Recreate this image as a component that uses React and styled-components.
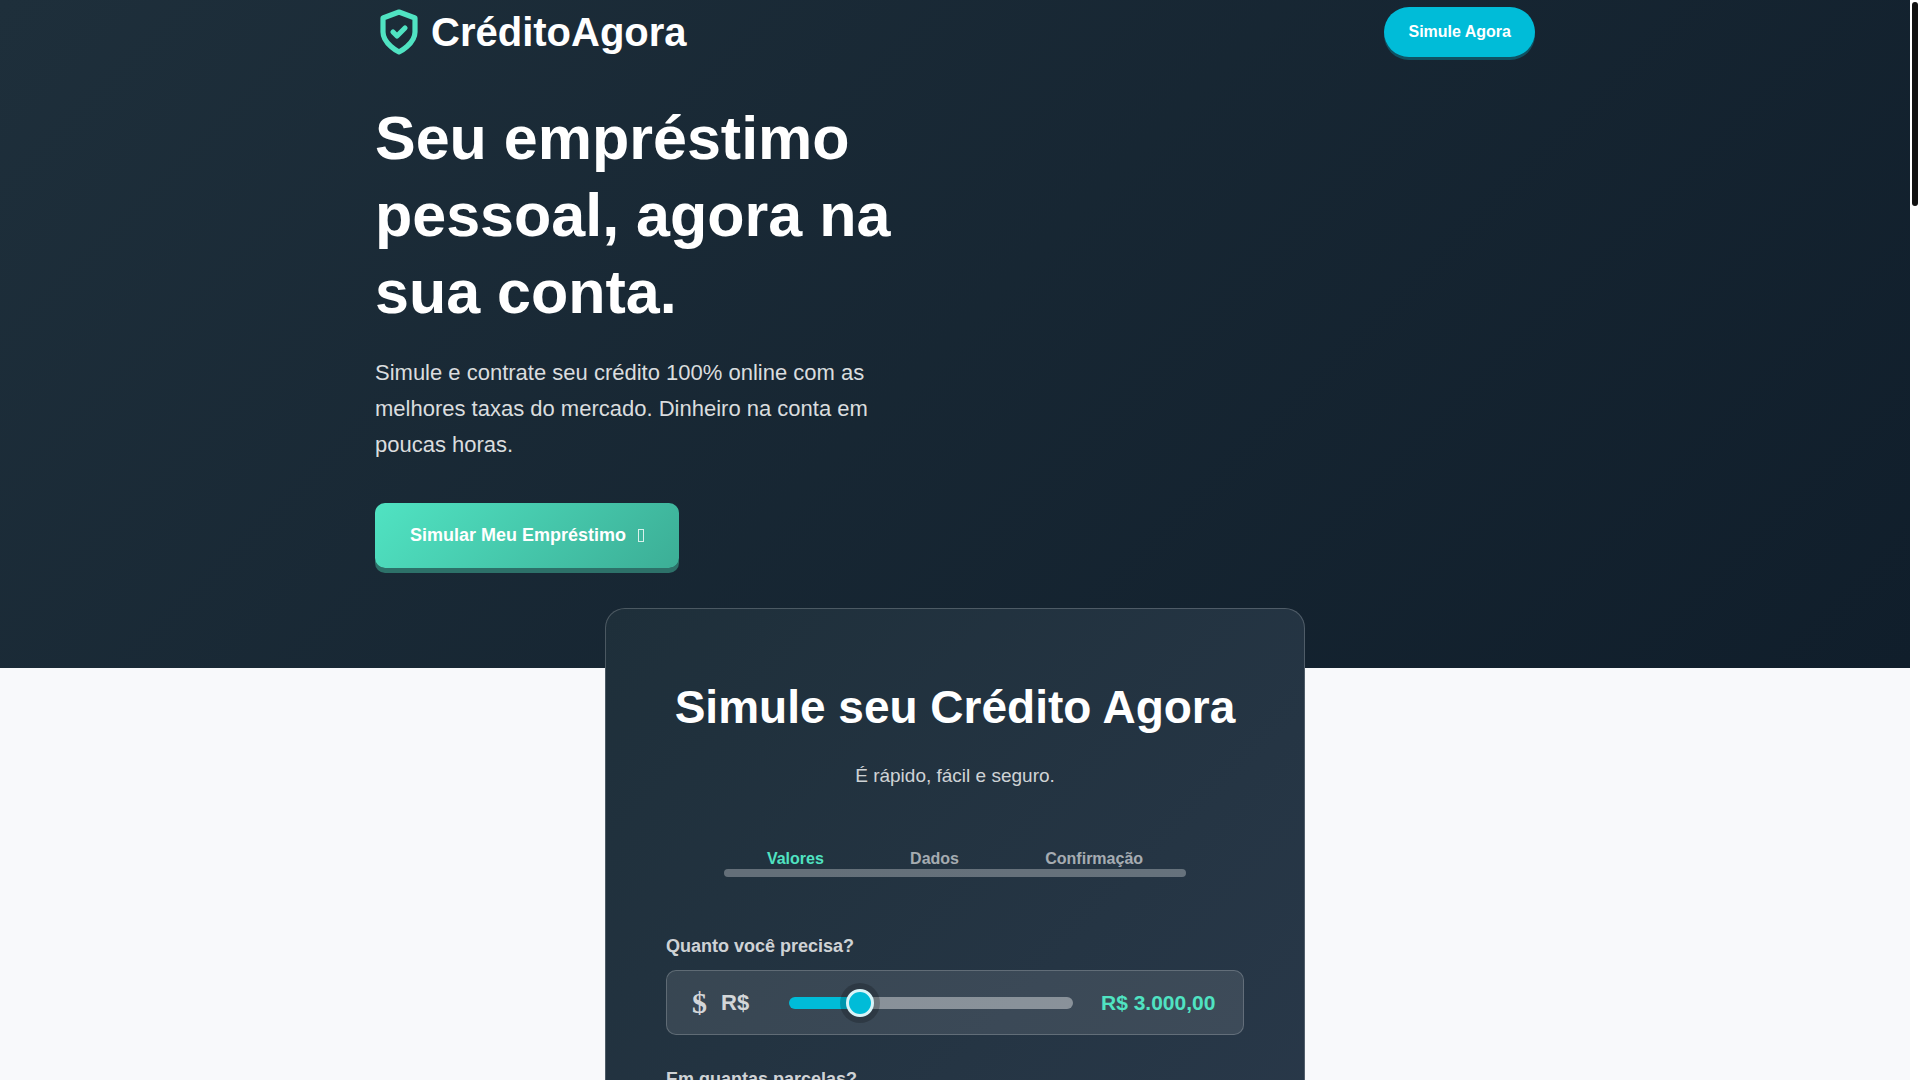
import { useState } from 'react';
import styled, { createGlobalStyle } from 'styled-components';

const GlobalStyle = createGlobalStyle`
  * {
    box-sizing: border-box;
    margin: 0;
    padding: 0;
  }

  html {
    scrollbar-width: none;
  }

  body {
    background-color: #f8f9fb;
    font-family: 'Liberation Sans', Arial, sans-serif;
    color: #ffffff;
  }
`;

const Shell = styled.div`
  display: flex;
  align-items: flex-start;
`;

const Page = styled.main`
  flex: 1;
  min-width: 0;
  padding-bottom: 100px;
`;

const ScrollRail = styled.div`
  position: sticky;
  top: 0;
  flex: 0 0 10px;
  height: 100vh;
  padding: 2px;
  background-color: #ffffff;
`;

const ScrollThumb = styled.div`
  height: 19%;
  border-radius: 3px;
  background-color: #111111;
`;

const Hero = styled.div`
  background: linear-gradient(135deg, #1e2f3b 0%, #101e2b 100%);
  padding-bottom: 100px;
`;

const Container = styled.div`
  max-width: 1200px;
  margin: 0 auto;
  padding: 0 20px;
`;

const Header = styled.header`
  height: 64px;
  display: flex;
  align-items: center;
  justify-content: space-between;
`;

const Logo = styled.a`
  display: flex;
  align-items: center;
  gap: 8px;
  color: #ffffff;
  font-size: 40px;
  font-weight: bold;
  text-decoration: none;
`;

const LogoMark = styled.svg`
  width: 48px;
  height: 48px;
`;

const HeaderButton = styled.button`
  height: 50px;
  padding: 0 24px;
  border: none;
  border-radius: 25px;
  background-color: #00bcd8;
  box-shadow: 0 3px 0 rgba(0, 188, 216, 0.3);
  color: #ffffff;
  font-family: inherit;
  font-size: 16px;
  font-weight: bold;
`;

const HeroContent = styled.section`
  display: grid;
  grid-template-columns: 1fr 1fr;
  column-gap: 60px;
  padding-top: 36px;
`;

const HeroTitle = styled.h1`
  font-size: 61px;
  line-height: 77px;
  margin-bottom: 24px;
`;

const HeroText = styled.p`
  font-size: 22px;
  line-height: 36px;
  color: rgba(255, 255, 255, 0.85);
  margin-bottom: 40px;
`;

const HeroButton = styled.button`
  height: 65px;
  padding: 0 35px;
  display: inline-flex;
  align-items: center;
  gap: 12px;
  border: none;
  border-radius: 10px;
  background: linear-gradient(135deg, #50e3c2 0%, #3cae96 100%);
  box-shadow: 0 5px 0 #2d7169;
  color: #ffffff;
  font-family: inherit;
  font-size: 18px;
  font-weight: bold;
`;

const ButtonGlyph = styled.span`
  width: 6px;
  height: 13px;
  border: 1px solid rgba(255, 255, 255, 0.8);
`;

const Card = styled.section`
  position: relative;
  max-width: 700px;
  margin: -60px auto 0;
  padding: 60px;
  border: 1px solid rgba(255, 255, 255, 0.2);
  border-radius: 20px;
  background: linear-gradient(135deg, #1e2f3a 0%, #2c3b4e 120%);
  background-origin: border-box;
`;

const CardTitle = styled.h2`
  font-size: 46px;
  line-height: 76px;
  text-align: center;
  margin-bottom: 16px;
`;

const CardText = styled.p`
  font-size: 19px;
  line-height: 30px;
  text-align: center;
  color: rgba(255, 255, 255, 0.8);
  margin-bottom: 58px;
`;

const Progress = styled.div`
  width: 80%;
  margin: 0 auto 55px;
`;

const Steps = styled.ol`
  display: flex;
  justify-content: space-around;
  list-style: none;
`;

const Step = styled.li`
  font-size: 16px;
  font-weight: bold;
  line-height: 20px;
  color: ${({ $active }) => ($active ? '#50e3c2' : 'rgba(255, 255, 255, 0.6)')};
`;

const ProgressTrack = styled.div`
  height: 8px;
  border-radius: 4px;
  background-color: rgba(255, 255, 255, 0.3);
`;

const Field = styled.div`
  margin-bottom: 30px;
`;

const FieldLabel = styled.label`
  display: block;
  font-size: 18px;
  font-weight: bold;
  line-height: 28px;
  color: rgba(255, 255, 255, 0.8);
  margin-bottom: 10px;
`;

const FieldBox = styled.div`
  height: 65px;
  display: flex;
  align-items: center;
  padding: 0 25px;
  border: 1px solid rgba(255, 255, 255, 0.2);
  border-radius: 10px;
  background-color: rgba(255, 255, 255, 0.1);
`;

const FieldIcon = styled.span`
  width: 29px;
  font-family: 'Liberation Serif', serif;
  font-size: 30px;
  font-weight: bold;
  color: rgba(255, 255, 255, 0.8);
`;

const FieldUnit = styled.span`
  width: 68px;
  font-size: 22px;
  font-weight: bold;
  color: rgba(255, 255, 255, 0.8);
`;

const Slider = styled.input`
  flex: 1;
  min-width: 0;
  height: 12px;
  appearance: none;
  border-radius: 6px;
  background: linear-gradient(
    to right,
    #00bcd8 var(--filled),
    rgba(255, 255, 255, 0.4) var(--filled)
  );

  &::-webkit-slider-thumb {
    appearance: none;
    width: 28px;
    height: 28px;
    border: 3px solid #d9f4f8;
    border-radius: 50%;
    background-color: #00bcd8;
    box-shadow: 0 0 0 6px rgba(0, 0, 0, 0.2);
  }
`;

const FieldValue = styled.output`
  min-width: 117px;
  margin-left: 28px;
  font-size: 21px;
  font-weight: bold;
  color: #50e3c2;
`;

const steps = ['Valores', 'Dados', 'Confirmação'];

const formatMoney = (value) =>
  `R$ ${String(value).replace(/\B(?=(\d{3})+$)/g, '.')},00`;

function SliderField({ id, label, icon, unit, min, max, step, initial, format }) {
  const [value, setValue] = useState(initial);
  const filled = ((value - min) / (max - min)) * 100;

  return (
    <Field>
      <FieldLabel htmlFor={id}>{label}</FieldLabel>
      <FieldBox>
        <FieldIcon aria-hidden='true'>{icon}</FieldIcon>
        <FieldUnit>{unit}</FieldUnit>
        <Slider
          id={id}
          type='range'
          min={min}
          max={max}
          step={step}
          value={value}
          onChange={(e) => setValue(Number(e.target.value))}
          style={{ '--filled': `${filled}%` }}
        />
        <FieldValue htmlFor={id}>{format(value)}</FieldValue>
      </FieldBox>
    </Field>
  );
}

function App() {
  return (
    <Shell>
      <GlobalStyle />
      <Page>
        <Hero>
          <Container>
            <Header>
              <Logo href='#'>
                <LogoMark
                  viewBox='0 0 24 24'
                  fill='none'
                  stroke='#50e3c2'
                  strokeWidth='2.6'
                  strokeLinejoin='round'
                  strokeLinecap='round'
                >
                  <path d='M12 22s8-4 8-10V5l-8-3-8 3v7c0 6 8 10 8 10z' />
                  <path d='M9 12l2 2 4-4' />
                </LogoMark>
                CréditoAgora
              </Logo>
              <HeaderButton type='button'>Simule Agora</HeaderButton>
            </Header>
            <HeroContent>
              <div>
                <HeroTitle>Seu empréstimo pessoal, agora na sua conta.</HeroTitle>
                <HeroText>
                  Simule e contrate seu crédito 100% online com as melhores
                  taxas do mercado. Dinheiro na conta em poucas horas.
                </HeroText>
                <HeroButton type='button'>
                  Simular Meu Empréstimo
                  <ButtonGlyph aria-hidden='true' />
                </HeroButton>
              </div>
            </HeroContent>
          </Container>
        </Hero>
        <Card>
          <CardTitle>Simule seu Crédito Agora</CardTitle>
          <CardText>É rápido, fácil e seguro.</CardText>
          <Progress>
            <Steps>
              {steps.map((step, index) => (
                <Step key={step} $active={index === 0}>
                  {step}
                </Step>
              ))}
            </Steps>
            <ProgressTrack />
          </Progress>
          <SliderField
            id='amount'
            label='Quanto você precisa?'
            icon='$'
            unit='R$'
            min={1000}
            max={10000}
            step={100}
            initial={3000}
            format={formatMoney}
          />
          <SliderField
            id='installments'
            label='Em quantas parcelas?'
            min={6}
            max={48}
            step={1}
            initial={12}
            format={(value) => `${value}x`}
          />
        </Card>
      </Page>
      <ScrollRail aria-hidden='true'>
        <ScrollThumb />
      </ScrollRail>
    </Shell>
  );
}

export default App;
